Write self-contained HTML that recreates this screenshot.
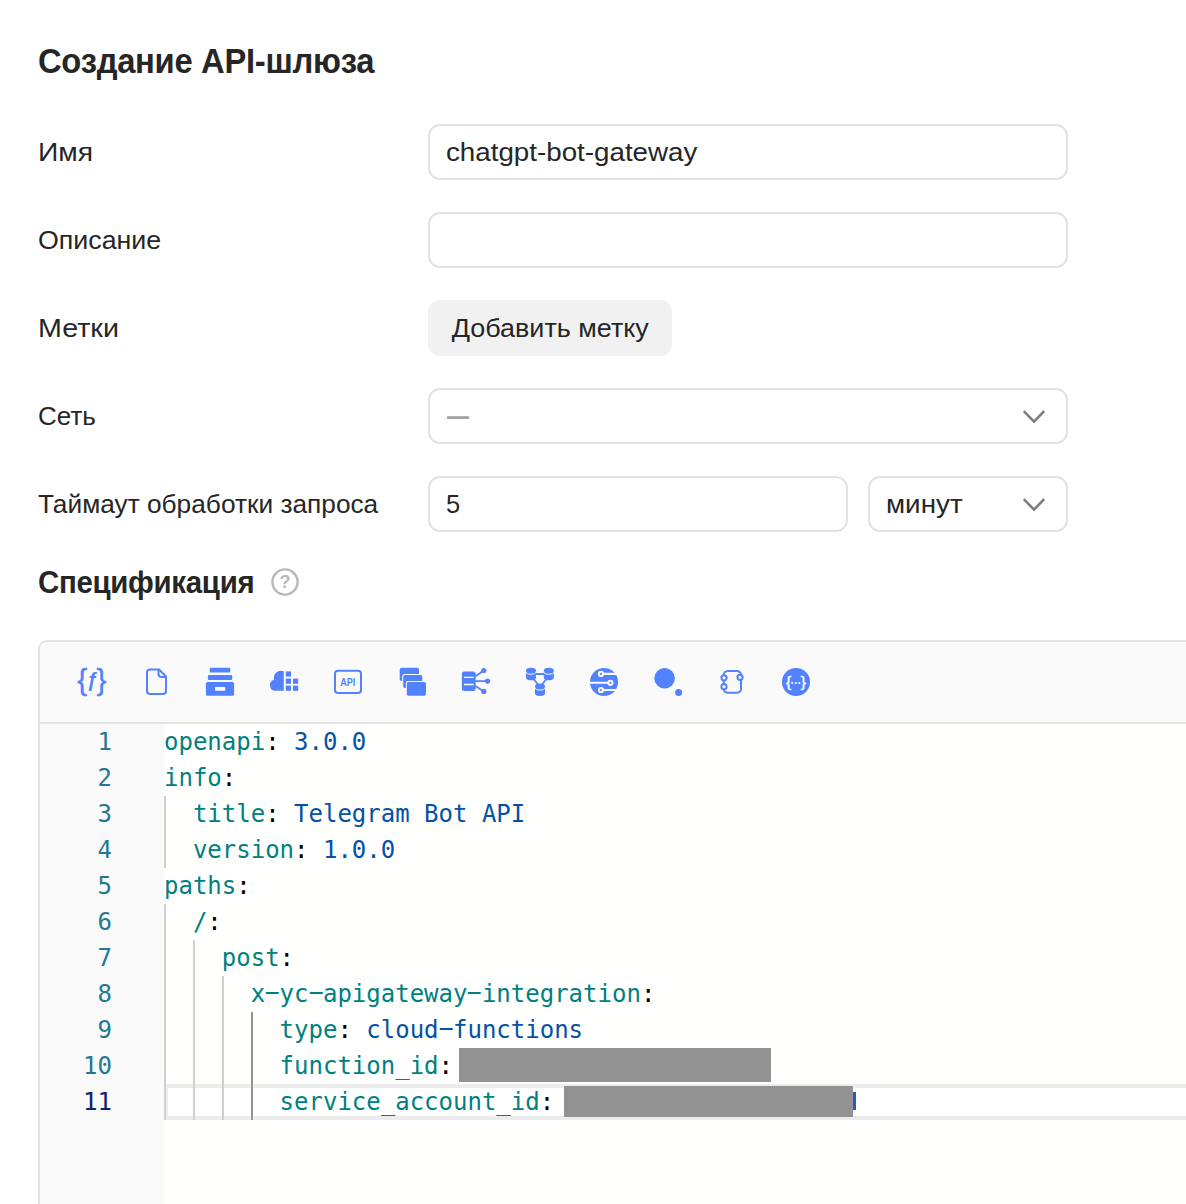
<!DOCTYPE html>
<html lang="ru"><head><meta charset="utf-8"><title>Создание API-шлюза</title>
<style>
*{box-sizing:border-box;margin:0;padding:0}
html,body{width:1186px;height:1204px;overflow:hidden;background:#fff}
body{font-family:"Liberation Sans",sans-serif;color:#262626;position:relative}
.abs{position:absolute;white-space:nowrap}
h1{position:absolute;left:38px;top:40.600px;font-size:34.500px;line-height:40px;font-weight:bold;color:#262626;white-space:nowrap;letter-spacing:-0.3px}
.lbl{position:absolute;left:38px;font-size:25.5px;line-height:32px;color:#262626;white-space:nowrap}
.inp{position:absolute;left:428px;width:640px;height:56px;border:2px solid #e3e3e3;border-radius:12px;background:#fff;font-size:25.5px;line-height:52px;padding-left:16px;color:#262626;white-space:nowrap}
.btn{position:absolute;left:428px;top:300px;width:244px;height:56px;border-radius:12px;background:#f1f1f1;font-size:25.5px;line-height:56px;text-align:center;color:#262626}
h2{position:absolute;left:38px;top:564.500px;font-size:30.800px;line-height:36px;font-weight:bold;color:#262626;white-space:nowrap;letter-spacing:-0.3px}
.editor{position:absolute;left:38px;top:640px;width:1200px;height:600px;border:2px solid #e3e3e3;border-radius:9px 0 0 0;background:#fffffe;overflow:hidden}
.tb{position:absolute;left:0;top:0;right:0;height:82px;background:#fafafa;border-bottom:2px solid #e3e3e3}
.gutter{position:absolute;left:0;top:82px;width:124px;bottom:0;background:#fafafa}
.code{position:absolute;left:0;top:82px;right:0;font-family:"DejaVu Sans Mono","Liberation Mono",monospace;font-size:24px;line-height:36px}
.ln{position:absolute;left:0;width:72px;text-align:right;color:#237893;height:36px}
.cl{position:absolute;left:124px;height:36px;white-space:pre}
.k{color:#008080}.v{color:#0451a5}.p{color:#000}

.code{--cw:14.45px}
.curline{position:absolute;left:124px;right:0;top:360px;height:36px;border:4px solid #ececec;border-right:0;background:#fff}
.guide{position:absolute;width:2px;background:#d0d0d0}
.guide.ga{background:#939393}
.lna{color:#0b216f}
.red{position:absolute;background:#929292}
.cursor{position:absolute;left:812px;top:367.800px;width:3.600px;height:18px;background:#1f5fb5}
.icons{position:absolute;left:0;top:0;display:block}
.sx{display:inline-block;transform-origin:0 50%}
.chev{position:absolute;left:593px;top:18.5px;width:24px;height:16px;fill:none;stroke:#7d7d7d;stroke-width:2.600}
.inp .chev{left:auto;right:20px}
.help{position:absolute;left:269px;top:566px;width:32px;height:32px}
#t_imya{transform:scaleX(1.109)}
#t_opis{transform:scaleX(1.05)}
#t_metki{transform:scaleX(1.125)}
#t_set{transform:scaleX(1.02)}
#t_timeout{transform:scaleX(1.03)}
#t_inp1{transform:scaleX(1.088)}
#t_btn{transform:scaleX(1.057)}
#t_minut{transform:scaleX(1.09)}
#t_h2{transform:scaleX(0.955)}
#t_h1{transform:scaleX(0.949)}
.h{display:inline-block;transform:translateY(-2px) scaleX(2.1)}
</style></head><body>
<h1><span class="sx" id="t_h1">Создание API-шлюза</span></h1>
<div class="lbl" style="top:136px"><span class="sx" id="t_imya">Имя</span></div>
<div class="inp" style="top:124px"><span class="sx" id="t_inp1">chatgpt-bot-gateway</span></div>
<div class="lbl" style="top:224px"><span class="sx" id="t_opis">Описание</span></div>
<div class="inp" style="top:212px"></div>
<div class="lbl" style="top:312px"><span class="sx" id="t_metki">Метки</span></div>
<div class="btn"><span class="sx" id="t_btn" style="transform-origin:50% 50%">Добавить метку</span></div>
<div class="lbl" style="top:400px"><span class="sx" id="t_set">Сеть</span></div>
<div class="inp" style="top:388px;color:#a3a3a3"><span class="sx" style="transform:translate(1px,-3.800px) scale(0.86,1.7)">—</span><svg class="chev" viewBox="0 0 24 16"><path d="M1.800 2.200L12 12.600L22.200 2.200"/></svg></div>
<div class="lbl" style="top:488px"><span class="sx" id="t_timeout">Таймаут обработки запроса</span></div>
<div class="inp" style="top:476px;width:420px">5</div>
<div class="inp" style="top:476px;left:868px;width:200px"><span class="sx" id="t_minut">минут</span><svg class="chev" viewBox="0 0 24 16"><path d="M1.800 2.200L12 12.600L22.200 2.200"/></svg></div>
<h2><span class="sx" id="t_h2">Спецификация</span></h2>
<svg class="help" viewBox="0 0 32 32"><circle cx="16" cy="16" r="12.600" fill="none" stroke="#b8b8b8" stroke-width="2.400"/><text x="16" y="22.400" text-anchor="middle" font-family="Liberation Sans, sans-serif" font-weight="bold" font-size="18" fill="#b8b8b8">?</text></svg>
<div class="editor">
<div class="tb">
<svg class="icons" width="1146" height="80" viewBox="40 642 1146 80" fill="#5282ff" stroke="none">
<!-- 1: {f} -->
<g font-family="Liberation Sans, sans-serif" fill="#5282ff" stroke="#5282ff" stroke-width="0.35">
<text x="77.300" y="689.600" font-size="29" textLength="10" lengthAdjust="spacingAndGlyphs">{</text>
<text x="96.400" y="689.600" font-size="29" textLength="10" lengthAdjust="spacingAndGlyphs">}</text>
<text x="86.600" y="687.200" font-size="20" font-style="italic" font-weight="bold" stroke="none" textLength="11" lengthAdjust="spacingAndGlyphs">ƒ</text>
</g>
<!-- 2: document -->
<path d="M150 669.5h9l7 7v14.5a3 3 0 0 1-3 3h-13a3 3 0 0 1-3-3v-18.5a3 3 0 0 1 3-3z" fill="none" stroke="#5282ff" stroke-width="2" stroke-linejoin="round"/>
<path d="M158.5 669.5v4.5a3 3 0 0 0 3 3h4.5" fill="none" stroke="#5282ff" stroke-width="2"/>
<!-- 3: archive -->
<rect x="209.7" y="667.8" width="20.6" height="4.8" rx="1.2"/>
<rect x="207.9" y="674.9" width="24.3" height="5.1" rx="1.2"/>
<path fill-rule="evenodd" d="M207.4 682h25.2a1.5 1.5 0 0 1 1.5 1.5v10.8a1.5 1.5 0 0 1-1.5 1.5h-25.2a1.5 1.5 0 0 1-1.5-1.5v-10.8a1.5 1.5 0 0 1 1.5-1.5zM216 687a1 1 0 0 0-1 1v1.8a1 1 0 0 0 1 1h8.3a1 1 0 0 0 1-1v-1.8a1 1 0 0 0-1-1z"/>
<!-- 4: cloud + blocks -->
<path d="M283.8 671.3v19.5h-8.3a5.6 5.6 0 0 1-1.4-11a7.2 7.2 0 0 1 9.7-8.5z"/>
<rect x="285.8" y="671.4" width="5.2" height="5.2"/>
<rect x="285.8" y="678.6" width="5.2" height="5.2"/>
<rect x="293" y="678.6" width="5.2" height="5.2"/>
<rect x="285.8" y="685.6" width="5.2" height="5.2"/>
<rect x="293" y="685.6" width="5.2" height="5.2"/>
<!-- 5: API -->
<rect x="335" y="670.7" width="26" height="22.2" rx="3" fill="none" stroke="#5282ff" stroke-width="2"/>
<text x="340.2" y="686.3" font-family="Liberation Sans, sans-serif" font-weight="bold" font-size="11.5" textLength="15.2" lengthAdjust="spacingAndGlyphs">API</text>
<!-- 6: stacked windows -->
<rect x="399.7" y="667.8" width="19.3" height="13.2" rx="1.8"/>
<rect x="402.2" y="674.1" width="21" height="14.8" rx="2.4" fill="#fafafa"/>
<rect x="403.2" y="675.1" width="19.1" height="12.9" rx="1.8"/>
<rect x="405.8" y="681" width="21.2" height="15.8" rx="2.4" fill="#fafafa"/>
<rect x="406.8" y="682" width="19.2" height="13.8" rx="1.8"/>
<!-- 7: server fanout -->
<path fill-rule="evenodd" d="M464.4 671.4h8.8a2.5 2.5 0 0 1 2.5 2.5v14.6a2.5 2.5 0 0 1-2.5 2.5h-8.8a2.5 2.5 0 0 1-2.5-2.5v-14.6a2.5 2.5 0 0 1 2.5-2.5zM464 676.7v1.4h9.6v-1.4zM464 683.8v1.4h9.6v-1.4z"/>
<g stroke="#5282ff" stroke-width="1.8" fill="none"><path d="M475.5 676.2l8.3-5.7M475.5 681.1h12M475.5 686l8.3 5.4"/></g>
<circle cx="483.8" cy="670.5" r="2.6"/><circle cx="487.6" cy="681.1" r="2.6"/><circle cx="483.8" cy="691.4" r="2.6"/>
<!-- 8: three cylinders -->
<g stroke="#5282ff" stroke-width="1.8" fill="none"><path d="M531 674h18M532 677l8 10M548 677l-8 10"/></g>
<g id="cyl"><path d="M526 670.6a5 2.8 0 0 1 10 0v6.8a5 2.8 0 0 1-10 0z"/><path d="M526 671.6a5 2.6 0 0 0 10 0" fill="none" stroke="#fafafa" stroke-width="1"/></g>
<g transform="translate(17.8 0)"><path d="M526 670.6a5 2.8 0 0 1 10 0v6.8a5 2.8 0 0 1-10 0z"/><path d="M526 671.6a5 2.6 0 0 0 10 0" fill="none" stroke="#fafafa" stroke-width="1"/></g>
<g transform="translate(9 15.8)"><path d="M526 670.6a5 2.8 0 0 1 10 0v6.8a5 2.8 0 0 1-10 0z"/><path d="M526 671.6a5 2.6 0 0 0 10 0" fill="none" stroke="#fafafa" stroke-width="1"/></g>
<!-- 9: circle with routes -->
<circle cx="604" cy="682" r="14"/>
<g stroke="#fafafa" stroke-width="2.1" fill="none"><path d="M603.2 673.900h15M590 682.800h18M603.2 690h15"/></g>
<g fill="#5282ff" stroke="#fafafa" stroke-width="2"><circle cx="601" cy="673.900" r="2.100"/><circle cx="610.400" cy="682.800" r="2.100"/><circle cx="601" cy="690" r="2.100"/></g>
<!-- 10: circle + dot -->
<circle cx="664.6" cy="678.3" r="10.3"/><circle cx="678.6" cy="692.4" r="3.5"/>
<!-- 11: rounded bracket with nodes -->
<path d="M729 670.9h7.5a4.5 4.5 0 0 1 4.5 3.5v14.6a3.7 3.7 0 0 1-3.7 3.7h-9.6a4 4 0 0 1-4-3.5v-14a4.3 4.3 0 0 1 4.3-4.3z" fill="none" stroke="#5282ff" stroke-width="2"/>
<g fill="#fafafa" stroke="#5282ff" stroke-width="2"><circle cx="724" cy="677.8" r="2.6"/><circle cx="724" cy="686.7" r="2.6"/><circle cx="740" cy="677.3" r="2.6"/></g>
<!-- 12: circle with braces -->
<circle cx="796" cy="682" r="14"/>
<g font-family="Liberation Sans, sans-serif" fill="#fff"><text x="786" y="687" font-size="15.500" stroke="#fff" stroke-width="0.4">{</text><text x="800.800" y="687" font-size="15.500" stroke="#fff" stroke-width="0.4">}</text><text x="796" y="686.500" text-anchor="middle" font-weight="bold" font-size="12" textLength="10.800" lengthAdjust="spacingAndGlyphs">···</text></g>
</svg>
</div>
<div class="gutter"></div>
<div class="code">
<div class="curline"></div>
<div class="guide" style="left:calc(124px + 0*var(--cw));top:72px;height:72px"></div>
<div class="guide" style="left:calc(124px + 0*var(--cw));top:180px;height:216px"></div>
<div class="guide" style="left:calc(124px + 2*var(--cw));top:216px;height:180px"></div>
<div class="guide" style="left:calc(124px + 4*var(--cw));top:252px;height:144px"></div>
<div class="guide ga" style="left:calc(124px + 6*var(--cw));top:288px;height:108px"></div>
<div class="ln" style="top:0px">1</div>
<div class="cl" style="top:0px"><span class="k">openapi</span><span class="p">: </span><span class="v">3.0.0</span></div>
<div class="ln" style="top:36px">2</div>
<div class="cl" style="top:36px"><span class="k">info</span><span class="p">:</span></div>
<div class="ln" style="top:72px">3</div>
<div class="cl" style="top:72px">  <span class="k">title</span><span class="p">: </span><span class="v">Telegram Bot API</span></div>
<div class="ln" style="top:108px">4</div>
<div class="cl" style="top:108px">  <span class="k">version</span><span class="p">: </span><span class="v">1.0.0</span></div>
<div class="ln" style="top:144px">5</div>
<div class="cl" style="top:144px"><span class="k">paths</span><span class="p">:</span></div>
<div class="ln" style="top:180px">6</div>
<div class="cl" style="top:180px">  <span class="k">/</span><span class="p">:</span></div>
<div class="ln" style="top:216px">7</div>
<div class="cl" style="top:216px">    <span class="k">post</span><span class="p">:</span></div>
<div class="ln" style="top:252px">8</div>
<div class="cl" style="top:252px">      <span class="k">x<span class="h">-</span>yc<span class="h">-</span>apigateway<span class="h">-</span>integration</span><span class="p">:</span></div>
<div class="ln" style="top:288px">9</div>
<div class="cl" style="top:288px">        <span class="k">type</span><span class="p">: </span><span class="v">cloud<span class="h">-</span>functions</span></div>
<div class="ln" style="top:324px">10</div>
<div class="cl" style="top:324px">        <span class="k">function_id</span><span class="p">: </span></div>
<div class="ln lna" style="top:360px">11</div>
<div class="cl" style="top:360px">        <span class="k">service_account_id</span><span class="p">: </span></div>
<div class="cursor"></div>
<div class="red" style="left:418.700px;top:323.600px;width:312.600px;height:34.600px"></div>
<div class="red" style="left:523.600px;top:361.800px;width:289.800px;height:31.300px"></div>
</div>
</div>
</body></html>
